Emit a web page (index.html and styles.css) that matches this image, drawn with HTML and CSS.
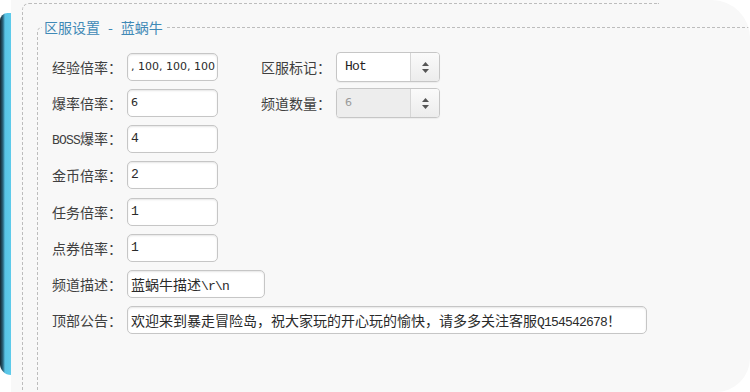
FILE: index.html
```html
<!DOCTYPE html>
<html lang="zh-CN">
  <head>
    <meta charset="UTF-8">
    <meta name="viewport" content="width=device-width, initial-scale=1.0">
    <title>区服设置</title>
    <link rel="stylesheet" href="styles.css">
  </head>
  <body>
    <div class="screen">
      <div class="rail"></div>
      <div class="panel">
        <div class="outer-box">
          <fieldset class="server-group">
            <legend>区服设置<span class="legend-dash">-</span>蓝蜗牛</legend>
            <div class="form">
              <div class="form-row">
                <div class="field">
                  <span class="field-label">经验倍率：</span>
                  <div class="text-box sans">, 100, 100, 100</div>
                </div>
                <div class="field">
                  <span class="field-label">区服标记：</span>
                  <div class="select-box">
                    <span class="select-value mono">Hot</span>
                    <span class="select-arrow">
                      <svg width="7" height="11" viewBox="0 0 7 11"><polygon points="0,4 3.5,0 7,4" fill="#555"/><polygon points="0,7 3.5,11 7,7" fill="#555"/></svg>
                    </span>
                  </div>
                </div>
              </div>
              <div class="form-row">
                <div class="field">
                  <span class="field-label">爆率倍率：</span>
                  <div class="text-box sans">6</div>
                </div>
                <div class="field">
                  <span class="field-label">频道数量：</span>
                  <div class="select-box disabled">
                    <span class="select-value sans">6</span>
                    <span class="select-arrow">
                      <svg width="7" height="11" viewBox="0 0 7 11"><polygon points="0,4 3.5,0 7,4" fill="#555"/><polygon points="0,7 3.5,11 7,7" fill="#555"/></svg>
                    </span>
                  </div>
                </div>
              </div>
              <div class="form-row">
                <div class="field">
                  <span class="field-label"><span class="mono">BOSS</span>爆率：</span>
                  <div class="text-box mono">4</div>
                </div>
              </div>
              <div class="form-row">
                <div class="field">
                  <span class="field-label">金币倍率：</span>
                  <div class="text-box mono">2</div>
                </div>
              </div>
              <div class="form-row">
                <div class="field">
                  <span class="field-label">任务倍率：</span>
                  <div class="text-box mono">1</div>
                </div>
              </div>
              <div class="form-row">
                <div class="field">
                  <span class="field-label">点券倍率：</span>
                  <div class="text-box mono">1</div>
                </div>
              </div>
              <div class="form-row">
                <div class="field">
                  <span class="field-label">频道描述：</span>
                  <div class="text-box wide">蓝蜗牛描述<span class="mono">\r\n</span></div>
                </div>
              </div>
              <div class="form-row">
                <div class="field">
                  <span class="field-label">顶部公告：</span>
                  <div class="text-box notice">欢迎来到暴走冒险岛，祝大家玩的开心玩的愉快，请多多关注客服<span class="mono">Q154542678</span>！</div>
                </div>
              </div>
            </div>
          </fieldset>
        </div>
      </div>
    </div>
  </body>
</html>
```

FILE: styles.css
```css
:root {
  --panel-bg: #f8f8f8;
  --dash: #bdbdbd;
  --text-label: #404040;
  --text-input: #2a2a2a;
  --legend: #3f89b6;
  --box-border: #c6c6c6;
}

body {
  margin: 0;
  background: #fff;
  font-family: "Noto Sans CJK SC", "Noto Sans", sans-serif;
}

.screen {
  display: flex;
  width: 750px;
  height: 392px;
  overflow: hidden;
}

.rail {
  flex: 0 0 11px;
  margin: 13px 0 17px;
  border-radius: 11px 0 0 16px;
  background: linear-gradient(90deg, #13242d 0, #2b6780 3px, #58c4e6 5px, #5ecbeb 100%);
}

.panel {
  flex: 1;
  background: var(--panel-bg);
  border-radius: 0 38px 34px 0;
  padding: 3px 0 0 11px;
  overflow: hidden;
}

.outer-box {
  width: 637px;
  height: 420px;
  border-top: 1px dashed var(--dash);
  border-left: 1px dashed var(--dash);
  border-top-left-radius: 7px;
  padding: 14px 0 0 14px;
  box-sizing: border-box;
}

.server-group {
  margin: 0 -140px 0 0;
  border: 1px dashed var(--dash);
  border-radius: 5px;
  padding: 17px 0 80px 4px;
}

.server-group legend {
  padding: 0 2px;
  font-size: 14px;
  line-height: 18px;
  color: var(--legend);
}

.legend-dash {
  margin: 0 8px;
}

.form {
  margin-left: 10px;
  display: flex;
  flex-direction: column;
  gap: 8.15px;
}

.form-row {
  display: flex;
  gap: 43px;
  height: 28px;
  align-items: center;
}

.field {
  display: flex;
  align-items: center;
}

.field-label {
  width: 75px;
  font-size: 14px;
  line-height: 28px;
  color: var(--text-label);
  white-space: nowrap;
}

.text-box {
  box-sizing: border-box;
  width: 91px;
  height: 28px;
  padding: 0 3px;
  border: 1px solid var(--box-border);
  border-radius: 5px;
  background: #fff;
  box-shadow: inset 0 1px 2px rgba(0, 0, 0, 0.1);
  font-size: 14px;
  line-height: 26px;
  color: var(--text-input);
  white-space: nowrap;
  overflow: hidden;
}

.text-box.wide { width: 138px; }
.text-box.notice { width: 520px; }

.sans {
  font-family: "DejaVu Sans", sans-serif;
  font-size: 11px;
}

.mono {
  font-family: "Liberation Mono", monospace;
  font-size: 13px;
  letter-spacing: -0.8px;
}

.select-box {
  box-sizing: border-box;
  display: flex;
  width: 104px;
  height: 30px;
  margin: -1px 0;
  border: 1px solid var(--box-border);
  border-radius: 4px;
  background: #fff;
  box-shadow: 0 1px 1px rgba(0, 0, 0, 0.05);
  overflow: hidden;
}

.select-value {
  flex: 1;
  padding-left: 8px;
  line-height: 28px;
  color: #222;
}

.select-arrow {
  width: 28px;
  display: flex;
  align-items: center;
  justify-content: center;
  border-left: 1px solid #d6d6d6;
  background: linear-gradient(#fafafa, #ececec);
}

.select-box.disabled .select-value {
  background: #ededed;
  color: #9a9a9a;
}
```
